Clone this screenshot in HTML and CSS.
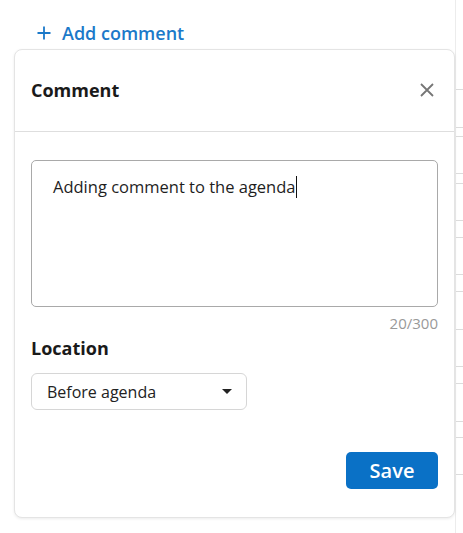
FILE: index.html
```html
<!DOCTYPE html>
<html>
<head>
<meta charset="utf-8">
<link rel="stylesheet" href="styles.css">
</head>
<body>
<div class="backdrop">
  <div class="row" style="height:90px"></div>
  <div class="row" style="height:38px"></div>
  <div class="row" style="height:9px"></div>
  <div class="row" style="height:37px"></div>
  <div class="row" style="height:10px"></div>
  <div class="row" style="height:37px"></div>
  <div class="row" style="height:17px"></div>
  <div class="row" style="height:37px"></div>
  <div class="row" style="height:17px"></div>
  <div class="row" style="height:38px"></div>
  <div class="row" style="height:37px"></div>
  <div class="row" style="height:17px"></div>
  <div class="row" style="height:38px"></div>
  <div class="row" style="height:16px"></div>
  <div class="row" style="height:37px"></div>
</div>
<div class="page">
  <div class="add-row">
    <svg class="plus" width="14" height="14" viewBox="0 0 14 14"><path d="M7 0.5V13.5M0.5 7H13.5" stroke="#1b79c9" stroke-width="1.8" fill="none"/></svg>
    <span class="add-text">Add comment</span>
  </div>
  <div class="card">
    <div class="card-head">
      <span class="title">Comment</span>
      <svg class="close" width="14" height="14" viewBox="0 0 14 14"><path d="M1 1L13 13M13 1L1 13" stroke="#767676" stroke-width="1.8" fill="none"/></svg>
    </div>
    <div class="card-body">
      <div class="textarea"><span>Adding comment to the agenda</span><span class="caret"></span></div>
      <div class="counter">20/300</div>
      <div class="label">Location</div>
      <div class="select">
        <span>Before agenda</span>
        <svg class="tri" width="10" height="5" viewBox="0 0 10 5"><path d="M0 0H10L5 5Z" fill="#222"/></svg>
      </div>
      <div class="actions"><button class="save">Save</button></div>
    </div>
  </div>
</div>
</body>
</html>
```
FILE: styles.css
```css
* { box-sizing: border-box; }
html, body { margin: 0; padding: 0; background: #fff; }
body {
  width: 463px;
  height: 533px;
  overflow: hidden;
  position: relative;
  font-family: "Open Sans", "Noto Sans", sans-serif;
  color: #1a1a1a;
}
.backdrop {
  position: absolute;
  left: 455px;
  top: 0;
  width: 8px;
  border-left: 1px solid #ececec;
  height: 533px;
  display: flex;
  flex-direction: column;
}
.row { border-bottom: 1px solid #dcdcdc; flex: none; }
.page {
  position: relative;
  padding: 0 8px 0 14px;
}
.add-row {
  height: 49px;
  display: flex;
  align-items: center;
  padding-left: 23px;
  padding-top: 16px;
  gap: 11px;
  color: #1b79c9;
}
.add-text { font-size: 18px; font-weight: 600; line-height: 24px; }
.card {
  width: 441px;
  border: 1px solid #e4e4e4;
  border-radius: 8px;
  background: #fff;
  box-shadow: 0 1px 3px rgba(0,0,0,0.08);
}
.card-head {
  height: 82px;
  border-bottom: 1px solid #dedede;
  display: flex;
  align-items: center;
  justify-content: space-between;
  padding: 0 20px 2px 16px;
}
.title { font-size: 18px; font-weight: 700; }
.card-body { padding: 28px 16px 28px 16px; }
.textarea {
  height: 147px;
  border: 1px solid #a9a9a9;
  border-radius: 5px;
  padding: 15px 21px;
  font-size: 16.5px;
  line-height: 22px;
  font-weight: 500;
  color: #1e1e1e;
}
.caret {
  display: inline-block;
  width: 1px;
  height: 22px;
  background: #111;
  vertical-align: top;
}
.counter {
  margin-top: 6px;
  text-align: right;
  font-size: 15px;
  line-height: 20px;
  color: #999;
}
.label {
  margin-top: 3px;
  font-size: 18px;
  line-height: 24px;
  font-weight: 700;
}
.select {
  margin-top: 13px;
  width: 216px;
  height: 37px;
  border: 1px solid #d6d6d6;
  border-radius: 6px;
  display: flex;
  align-items: center;
  justify-content: space-between;
  padding: 0 14px 0 15px;
  font-size: 16px;
  color: #222;
}
.actions {
  margin-top: 42px;
  display: flex;
  justify-content: flex-end;
}
.save {
  width: 92px;
  height: 37px;
  border: none;
  border-radius: 5px;
  background: #0a71c6;
  color: #fff;
  font-family: "Open Sans", "Noto Sans", sans-serif;
  font-size: 20px;
  font-weight: 600;
  padding: 0;
}
```
